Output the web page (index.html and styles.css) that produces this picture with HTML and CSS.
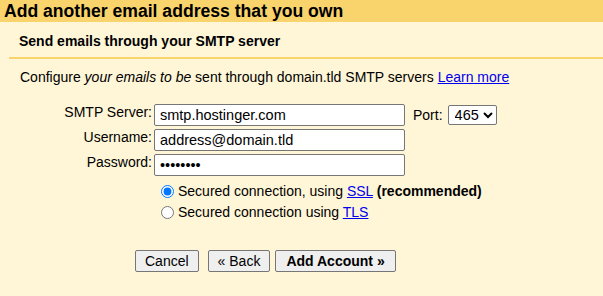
FILE: index.html
```html
<!DOCTYPE html>
<html>
<head>
<meta charset="utf-8">
<link rel="stylesheet" href="styles.css">
</head>
<body>
<div class="header">Add another email address that you own</div>
<div class="panel">
  <div class="subhead">Send emails through your SMTP server</div>
  <p class="intro">Configure <i>your emails to be</i> sent through domain.tld SMTP servers <a href="#">Learn more</a></p>
  <div class="form">
    <label class="lbl">SMTP Server:</label>
    <div class="field-row">
      <input class="txt" type="text" value="smtp.hostinger.com">
      <span class="port-lbl">Port:</span>
      <select class="port"><option>465</option></select>
    </div>
    <label class="lbl">Username:</label>
    <div class="field-row"><input class="txt" type="text" value="address@domain.tld"></div>
    <label class="lbl">Password:</label>
    <div class="field-row"><input class="txt" type="password" value="password"></div>
    <div></div>
    <div class="radios">
      <label class="radio"><input type="radio" name="sec" checked>Secured connection, using <a href="#">SSL</a> <b>(recommended)</b></label>
      <label class="radio"><input type="radio" name="sec">Secured connection using <a href="#">TLS</a></label>
    </div>
  </div>
  <div class="buttons">
    <button class="btn btn-cancel">Cancel</button>
    <button class="btn btn-back">« Back</button>
    <button class="btn btn-add">Add Account »</button>
  </div>
</div>
</body>
</html>
```
FILE: styles.css
```css
html, body {
  margin: 0;
  padding: 0;
  background: #fff6d8;
  font-family: "Liberation Sans", Arial, sans-serif;
  color: #000;
}
.header {
  background: #f9d36b;
  height: 22px;
  box-sizing: border-box;
  padding: 1px 4px;
  font-size: 17.6px;
  font-weight: bold;
  line-height: 20px;
  white-space: nowrap;
}
.panel {
  padding: 0;
}
.subhead {
  margin-left: 9px;
  padding: 11px 0 8px 10px;
  border-bottom: 2px solid #f9d36b;
  font-size: 14px;
  font-weight: bold;
  line-height: 16px;
}
.intro {
  margin: 10px 0 0 20px;
  font-size: 14px;
  line-height: 16px;
}
a {
  color: #0000ee;
  text-decoration: underline;
}
.form {
  display: grid;
  grid-template-columns: 152px auto;
  column-gap: 2px;
  row-gap: 3px;
  margin-top: 19px;
  font-size: 14px;
  justify-content: start;
}
.lbl {
  text-align: right;
  line-height: 16px;
  padding-top: 0;
}
.field-row {
  display: flex;
  align-items: baseline;
}
.txt {
  width: 251px;
  height: 22px;
  box-sizing: border-box;
  border: 1px solid #767676;
  border-radius: 2px;
  padding: 0 5px;
  font-family: "Liberation Sans", Arial, sans-serif;
  font-size: 14.5px;
  background: #fff;
  margin: 0;
}
.port-lbl {
  margin-left: 8px;
  margin-right: 5px;
}
.port {
  height: 20px;
  width: 49px;
  box-sizing: border-box;
  border: 1px solid #767676;
  border-radius: 2px;
  font-family: "Liberation Sans", Arial, sans-serif;
  font-size: 14.5px;
  background: #fff;
  padding: 0 0 0 2px;
  margin: 0;
  align-self: flex-start;
  margin-top: 1px;
}
.radios {
  display: flex;
  flex-direction: column;
  margin-top: 2px;
  padding-left: 2px;
}
.radio {
  display: block;
  line-height: 21px;
  height: 21px;
  white-space: nowrap;
}
.radio input {
  width: 13px;
  height: 13px;
  margin: 0 4px 0 5px;
  vertical-align: -2px;
}
.buttons {
  display: flex;
  margin: 27px 0 0 135px;
}
.btn {
  height: 22px;
  box-sizing: border-box;
  border: 1px solid #767676;
  border-radius: 2px;
  background: #efefef;
  font-family: "Liberation Sans", Arial, sans-serif;
  font-size: 14px;
  padding: 0 9px;
  color: #000;
  margin: 0;
}
.btn-back {
  margin-left: 9px;
}
.btn-add {
  margin-left: 5px;
  padding: 0 10px;
  font-weight: bold;
}
```
